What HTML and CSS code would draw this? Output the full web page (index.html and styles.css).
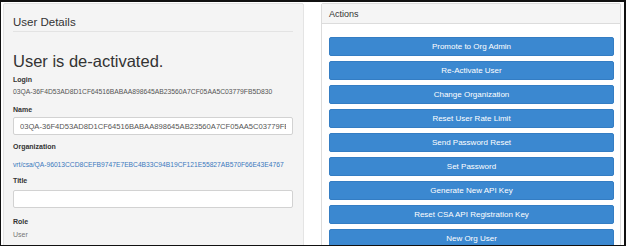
FILE: index.html
```html
<!DOCTYPE html>
<html lang="en">
<head>
    <meta charset="UTF-8">
    <title>User Details</title>
    <link rel="stylesheet" href="styles.css">
</head>
<body>
    <div class="frame">
        <div class="details-panel">
            <h4 class="panel-heading">User Details</h4>
            <h3 class="status">User is de-activated.</h3>

            <div class="label label-login">Login</div>
            <div class="value">03QA-36F4D53AD8D1CF64516BABAA898645AB23560A7CF05AA5C03779FB5D830</div>

            <div class="label label-name">Name</div>
            <input class="field" type="text" value="03QA-36F4D53AD8D1CF64516BABAA898645AB23560A7CF05AA5C03779FB5D830">

            <div class="label label-org">Organization</div>
            <a class="org-link" href="#">vrt/csa/QA-96013CCD8CEFB9747E7EBC4B33C94B19CF121E55827AB570F66E43E4767</a>

            <div class="label label-title">Title</div>
            <input class="field field-title" type="text" value="">

            <div class="label label-role">Role</div>
            <div class="value value-role">User</div>
        </div>

        <div class="actions-panel">
            <div class="actions-heading">Actions</div>
            <div class="actions-body">
                <button class="btn">Promote to Org Admin</button>
                <button class="btn">Re-Activate User</button>
                <button class="btn">Change Organization</button>
                <button class="btn">Reset User Rate Limit</button>
                <button class="btn">Send Password Reset</button>
                <button class="btn">Set Password</button>
                <button class="btn">Generate New API Key</button>
                <button class="btn">Reset CSA API Registration Key</button>
                <button class="btn">New Org User</button>
            </div>
        </div>
    </div>
</body>
</html>
```

FILE: styles.css
```css
body {
    margin: 0;
    font-family: 'Liberation Sans', Arial, sans-serif;
    background: #fff;
    color: #333;
}
.frame {
    box-sizing: border-box;
    width: 626px;
    height: 246px;
    border-style: solid;
    border-color: #111;
    border-width: 2px 2px 1px 1px;
    padding: 1px 2px 0 2px;
    display: flex;
    gap: 17px;
    overflow: hidden;
    background: #fff;
}
.details-panel {
    box-sizing: border-box;
    width: 301px;
    height: 300px;
    flex: none;
    background: #f4f4f4;
    border: 1px solid #e4e4e4;
    border-radius: 2px;
    padding: 0 10px 0 9px;
    display: flex;
    flex-direction: column;
    align-items: flex-start;
}
.panel-heading {
    align-self: stretch;
    margin: 11px 0 0 0;
    padding-bottom: 2px;
    font-size: 11.5px;
    line-height: 14px;
    font-weight: normal;
    color: #333;
    border-bottom: 1px solid #e3e3e3;
}
.status {
    margin: 19px 0 0 0;
    font-size: 16.5px;
    line-height: 20px;
    font-weight: normal;
    color: #333;
}
.label {
    font-size: 7px;
    line-height: 9px;
    font-weight: bold;
    color: #333;
}
.label-login { margin-top: 4px; }
.label-name { margin-top: 9px; }
.label-org { margin-top: 7px; }
.label-title { margin-top: 7px; }
.label-role { margin-top: 9px; }
.value {
    margin-top: 3px;
    font-size: 6.75px;
    line-height: 9px;
    color: #555;
    white-space: nowrap;
}
.value-role {
    margin-top: 4px;
    font-size: 7px;
    color: #777;
}
.field {
    box-sizing: border-box;
    align-self: stretch;
    margin: 3px 0 0 0;
    height: 18px;
    padding: 0 6px;
    border: 1px solid #d2d2d2;
    border-radius: 2px;
    background: #fff;
    font-family: 'Liberation Sans', Arial, sans-serif;
    font-size: 7.6px;
    color: #555;
    outline: none;
}
.field-title {
    margin-top: 5px;
}
.org-link {
    margin-top: 9px;
    font-size: 6.7px;
    line-height: 9px;
    color: #3a78bd;
    text-decoration: none;
    white-space: nowrap;
}
.actions-panel {
    box-sizing: border-box;
    width: 300px;
    height: 300px;
    flex: none;
    border: 1px solid #dcdcdc;
    border-radius: 2px;
    background: #fff;
}
.actions-heading {
    padding: 5px 7px 3px 7px;
    font-size: 9px;
    line-height: 11px;
    color: #333;
    background: #f5f5f5;
    border-bottom: 1px solid #dcdcdc;
}
.actions-body {
    padding: 13px 6px 0 7px;
    display: flex;
    flex-direction: column;
    gap: 5px;
}
.btn {
    box-sizing: border-box;
    height: 19px;
    padding: 0;
    background: #3b88d0;
    border: 1px solid #347dc3;
    border-radius: 2px;
    color: #fff;
    font-family: 'Liberation Sans', Arial, sans-serif;
    font-size: 8px;
    line-height: 17px;
    text-align: center;
    cursor: pointer;
}
.btn:hover {
    background: #2f74b5;
}
```
